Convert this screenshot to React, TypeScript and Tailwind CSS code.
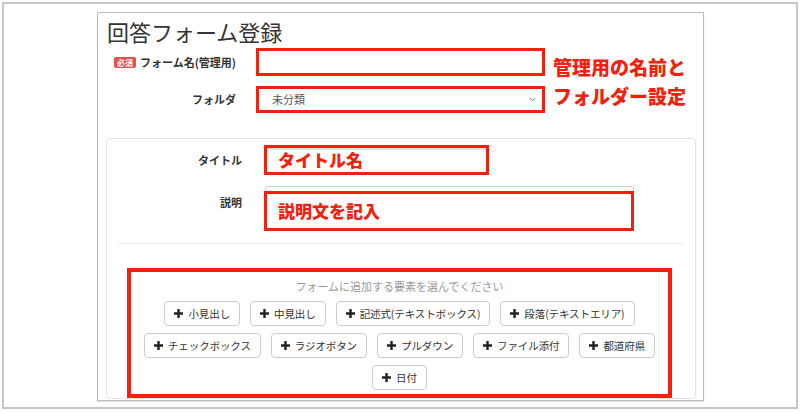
import { ChevronDown } from "lucide-react";

/* Button rows, laid out as in the picture */
const ROWS: string[][] = [
  ["小見出し", "中見出し", "記述式(テキストボックス)", "段落(テキストエリア)"],
  ["チェックボックス", "ラジオボタン", "プルダウン", "ファイル添付", "都道府県"],
  ["日付"],
];

function PlusIcon() {
  return (
    <svg width="9" height="9" viewBox="0 0 9 9" className="shrink-0">
      <path d="M3.3 0h2.4v9H3.3zM0 3.3h9v2.4H0z" fill="#222222" />
    </svg>
  );
}

function AddButton({ label }: { label: string }) {
  return (
    <div className="flex h-[25px] items-center gap-[5px] rounded-[4px] border border-[#cccccc] bg-white px-[9px] text-[10.5px] tracking-[-0.1px] text-[#333333]">
      <PlusIcon />
      <span>{label}</span>
    </div>
  );
}

export default function App() {
  return (
    <div className="h-[413px] w-[800px] overflow-hidden bg-white font-['Noto_Sans_CJK_JP',sans-serif]">
      <div className="ml-[2px] mt-[2px] h-[407px] w-[796px] border-2 border-[#c6c6c6]">
        <div className="ml-[93px] mt-[8px] h-[389px] w-[607px] overflow-hidden border border-[#bdbdbd] bg-white text-[#333333] shadow-[0_1px_1px_rgba(0,0,0,0.12)]">
          <h1 className="pl-[9px] pt-[3px] text-[22px] leading-[30px]">回答フォーム登録</h1>

          {/* name + folder */}
          <div className="mt-[2px] flex items-start">
            <div className="flex flex-col gap-[10px]">
              <div className="flex h-[28px] items-center">
                <div className="flex w-[138px] items-center justify-end">
                  <span className="mr-[4px] rounded-[2px] bg-[#d9534f] px-[3px] text-[8px] font-bold leading-[11px] text-white">
                    必須
                  </span>
                  <span className="text-[11px] font-bold">フォーム名(管理用)</span>
                </div>
                <div className="ml-[20px] h-[28px] w-[289px] border-[3px] border-[#f2200c] bg-white" />
              </div>
              <div className="flex h-[27px] items-center">
                <div className="flex w-[138px] justify-end text-[11px] font-bold">フォルダ</div>
                <div className="ml-[20px] flex h-[27px] w-[289px] items-center justify-between border-[3px] border-[#f2200c] bg-white pl-[13px] pr-[5px]">
                  <span className="text-[11px] text-[#555555]">未分類</span>
                  <ChevronDown size={9} strokeWidth={2.5} className="text-[#666666]" />
                </div>
              </div>
            </div>
            <div className="ml-[8px] mt-[4px] text-[19px] font-black leading-[29px] text-[#f2200c]">
              <div>管理用の名前と</div>
              <div>フォルダー設定</div>
            </div>
          </div>

          {/* card */}
          <div className="ml-[8px] mt-[25px] w-[590px] rounded-[4px] border border-[#e3e3e3] pt-[6px]">
            <div className="flex h-[30px] items-center">
              <div className="flex w-[135px] justify-end text-[11px] font-bold">タイトル</div>
              <div className="ml-[22px] flex h-[30px] w-[225px] items-center border-[3px] border-[#f2200c] bg-white pl-[11px] text-[17px] font-black text-[#f2200c] shadow-[inset_0_2px_1px_rgba(0,0,0,0.12)]">
                タイトル名
              </div>
            </div>

            <div className="mt-[11px] flex items-start">
              <div className="flex w-[135px] justify-end pt-[8px] text-[11px] font-bold">説明</div>
              <div className="relative ml-[23px] h-[43px] w-[369px] rounded-[3px] border border-[#d0d0d0] bg-white">
                <div className="absolute -left-[2px] -right-[1px] top-[4px] flex h-[40px] items-center border-[3px] border-[#f2200c] bg-white pl-[11px] text-[17px] font-black text-[#f2200c]">
                  説明文を記入
                </div>
              </div>
            </div>

            <div className="mx-[11px] mt-[14px] h-px bg-[#eeeeee]" />

            <div className="ml-[20px] mt-[24px] w-[545px] border-[4px] border-[#f2200c] pb-[4px] pt-[6px]">
              <div className="text-center text-[11px] leading-[16px] text-[#999999]">
                フォームに追加する要素を選んでください
              </div>
              <div className="mt-[7px] flex flex-col items-center gap-[7px]">
                {ROWS.map((row, i) => (
                  <div key={i} className="flex justify-center gap-[10px]">
                    {row.map((b) => (
                      <AddButton key={b} label={b} />
                    ))}
                  </div>
                ))}
              </div>
            </div>
          </div>
        </div>
      </div>
    </div>
  );
}
